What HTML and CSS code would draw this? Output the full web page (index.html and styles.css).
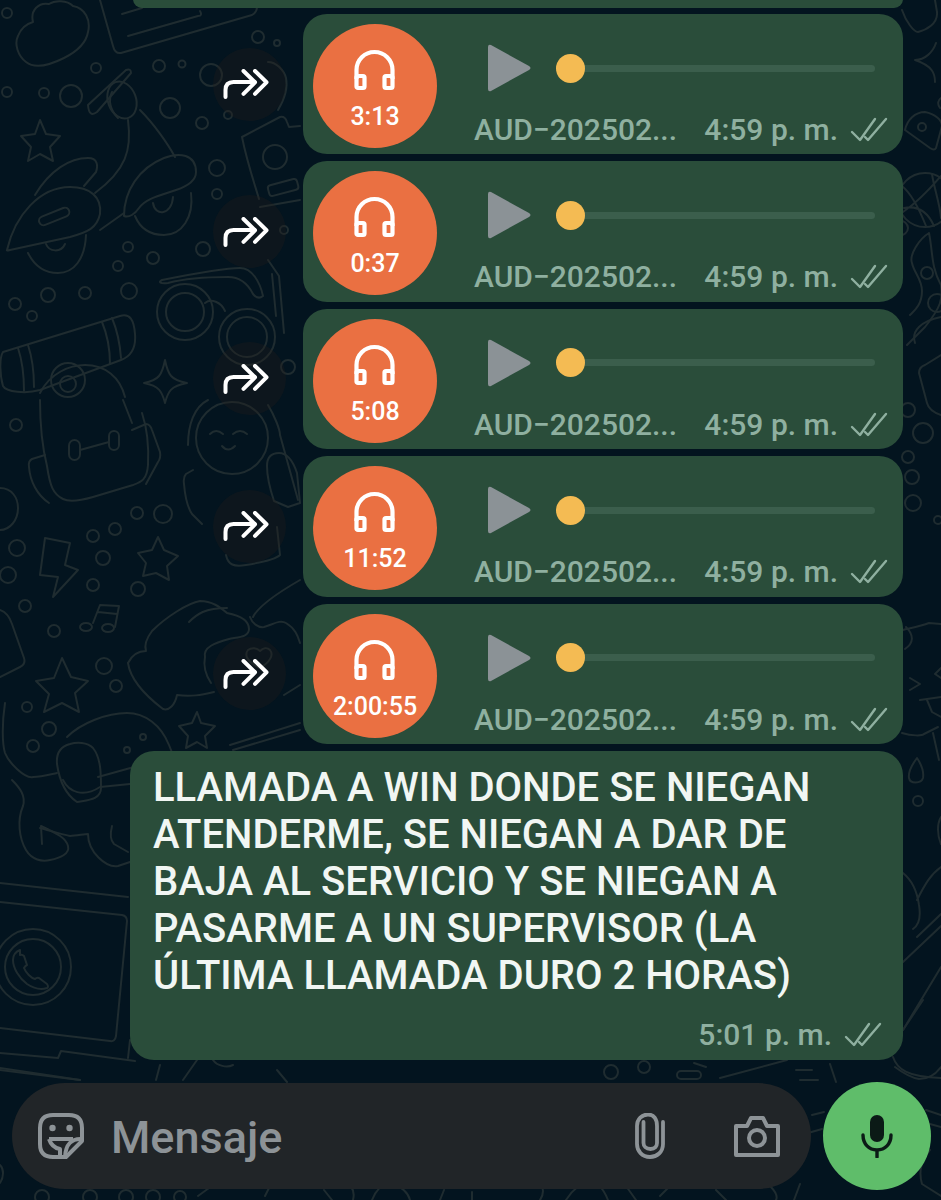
FILE: index.html
```html
<!DOCTYPE html>
<html lang="es">
<head>
<meta charset="utf-8">
<title>Chat</title>
<link rel="stylesheet" href="styles.css">
</head>
<body>
<svg class="wallpaper" width="941" height="1200" viewBox="0 0 941 1200" fill="none" stroke="#1f2c30" stroke-width="2" stroke-linecap="round" stroke-linejoin="round" aria-hidden="true">
  <!-- cloud and note card -->
  <path d="M33 22c-3-12 6-20 16-18 6-4 18-4 24 2 12 2 18 14 15 26-2 12-12 20-24 26-12 6-28 12-38 4-8-6-12-18-8-26 3-8 8-12 15-14z"/>
  <path d="M100 0l13 46q2 8 8 7L252 15q5-3 5-8"/>
  <path d="M128 36l70-20q5 0 2-5M122 14l20-6"/>
  <!-- scooter -->
  <path d="M88 105L126 70q5-2 5 3L97 112q-8 6-9-7z"/>
  <ellipse cx="122" cy="100" rx="14" ry="19" transform="rotate(-20 122 100)"/>
  <path d="M112 92c-4 8-2 18 6 26"/>
  <path d="M128 120c4 30-2 50-33 73"/>
  <path d="M140 110c14 14 28 34 35 47"/>
  <path d="M35 195C50 170 70 158 88 158c10 0 10 8 8 14l-12 14"/>
  <path d="M7 250C15 215 40 187 70 187c20 0 32 10 30 27-3 14-12 18-30 23l-60 13q-4 1-3 0z"/>
  <rect x="38" y="212" width="32" height="9" rx="4.500" transform="rotate(-22 54 216)"/>
  <path d="M28 253c6 12 16 20 30 20 16 0 27-14 28-38"/>
  <path d="M46 244c3 8 15 9 19 0"/>
  <path d="M100 230l24-17"/>
  <path d="M124 216c0-25 15-48 40-58 15-6 32-4 32 14 0 8-8 14-20 18-14 5-30 8-37 18-4 6-10 10-15 8z"/>
  <path d="M135 216c5 12 15 19 29 19 18 0 30-18 27-42"/>
  <path d="M153 203c2 14 19 12 20-6"/>
  <path d="M40 120l6 14 14 2-10 11 3 14-13-7-12 7 3-14-10-11 14-2z"/>
  <!-- bubbles around the scooter -->
  <g>
    <circle cx="7" cy="13" r="5"/><circle cx="96" cy="68" r="5"/><circle cx="159" cy="66" r="6"/><circle cx="182" cy="64" r="3.500"/>
    <circle cx="7" cy="92" r="5"/><circle cx="44" cy="93" r="5"/><circle cx="71" cy="96" r="11"/><circle cx="170" cy="108" r="10"/>
    <circle cx="202" cy="123" r="6"/><circle cx="217" cy="168" r="8"/><circle cx="217" cy="194" r="5"/><circle cx="258" cy="37" r="6"/>
    <circle cx="277" cy="43" r="3"/><circle cx="211" cy="75" r="11"/><circle cx="228" cy="115" r="4"/><circle cx="128" cy="247" r="5"/>
    <circle cx="153" cy="258" r="6"/><circle cx="118" cy="266" r="5"/><circle cx="203" cy="249" r="7"/><circle cx="284" cy="230" r="4"/>
    <circle cx="288" cy="367" r="7"/><circle cx="48" cy="295" r="7"/><circle cx="85" cy="293" r="6"/><circle cx="129" cy="291" r="8"/>
    <circle cx="15" cy="304" r="6"/><circle cx="32" cy="316" r="5"/>
  </g>
  <!-- heart, can and glasses -->
  <path d="M268 62c8 0 16 8 18 16 2 10-2 22-8 32"/>
  <path d="M242 137l38-20q5-1 7 5l2 5 11-1M242 137c5 25 12 45 17 62"/>
  <circle cx="275" cy="157" r="12"/><rect x="268" y="182" width="30" height="11" rx="3" transform="rotate(-15 283 187)"/>
  <path d="M260 207l40-7"/>
  <path d="M162 280c30-6 60-12 78-12 12 0 20 14 23 28q-5 4-10-2c-6-12-14-17-25-17-20 0-45 2-60 6-8 1-10-1-6-3z"/>
  <circle cx="185" cy="312" r="28"/><circle cx="185" cy="312" r="19"/>
  <circle cx="247" cy="337" r="28"/><circle cx="247" cy="337" r="20"/>
  <path d="M268 260l11 16 5 57M272 274l4 42M205 303c6-5 16-1 20 8"/>
  <!-- flashlight and sparkle -->
  <path d="M3 352L120 316c10-3 14 4 15 18 1 12-3 22-14 26L40 390c-14 4-34 2-37-4-3-10-4-28 0-34z"/>
  <path d="M102 322c5 12 8 26 8 42M112 318c5 12 8 26 9 40M18 348c4 12 6 28 6 43M28 345c4 12 6 28 6 42"/>
  <circle cx="68" cy="380" r="17"/><circle cx="68" cy="384" r="8"/>
  <path d="M40 393c10-20 30-28 45-28 20 0 35 12 40 32"/>
  <path d="M165 360c3 15 6 20 22 23-16 3-19 8-22 20-3-12-6-17-21-20 15-3 18-8 21-23z"/>
  <!-- backpack -->
  <path d="M40 400c0 25 3 50 7 66 3 20 6 28 16 33 6 3 16 2 30-2l40-12c8-3 14-5 15-20 1-20-2-40-6-52M123 400l9 23"/>
  <rect x="69" y="440" width="11" height="20" rx="5.500"/><rect x="109" y="431" width="10" height="19" rx="5"/>
  <path d="M80 450l29-8"/>
  <path d="M45 455l-13 4q-4 2-3 8c1 14 8 28 20 36M132 430l14-6q4 0 6 6l8 22q1 6-2 10l-12 22"/>
  <path d="M0 488c12 0 18 10 18 20 0 12-8 22-18 22"/>
  <circle cx="16" cy="425" r="6"/>
  <!-- smiling character -->
  <circle cx="232" cy="438" r="36"/>
  <path d="M188 445c0-20 6-38 20-45M268 405c6 10 12 24 12 30l18 65"/>
  <path d="M210 434q6-6 13 0M233 434q7-6 14 0M222 446q6 7 13 0"/>
  <path d="M193 470l-7 4q-3 3-2 10c1 12 4 24 8 30l10 10"/>
  <path d="M267 466c0-8 4-13 12-13 8 0 14 8 18 20l3 30-12 4-14-6c-4-12-7-24-7-35z"/>
  <path d="M226 555c2 10 8 12 20 10 12-2 30-6 34-10l-3-28"/>
  <!-- lightning, note and stars -->
  <path d="M45 538l25 5-5 22 13 5-25 27 5-20-18-2z"/>
  <path d="M93 623l7-18 19 1-4 21M98 612l19 2"/><ellipse cx="86" cy="627" rx="6" ry="4"/><ellipse cx="108" cy="628" rx="6" ry="4"/>
  <path d="M158 537l6 13 14 6-11 10 2 14-13-7-13 3 3-13-8-10 14-3z"/>
  <path d="M62 658l9 19 17 4-13 12 4 19-17-9-18 9 5-18-13-13 18-3z"/>
  <path d="M197 712l4 11 14 3-10 10 2 12-10-6-11 6 2-12-9-10 13-3z"/>
  <g>
    <circle cx="137" cy="513" r="6"/><circle cx="163" cy="514" r="9"/><circle cx="115" cy="529" r="6"/><circle cx="93" cy="536" r="6"/>
    <circle cx="103" cy="558" r="7"/><circle cx="17" cy="548" r="8"/><circle cx="8" cy="575" r="8"/><circle cx="93" cy="585" r="6"/>
    <circle cx="138" cy="589" r="7"/><circle cx="25" cy="606" r="6"/><circle cx="54" cy="631" r="6"/><circle cx="104" cy="666" r="8"/>
    <circle cx="116" cy="686" r="6"/><circle cx="27" cy="707" r="5"/><circle cx="49" cy="729" r="7"/><circle cx="33" cy="746" r="6"/>
  </g>
  <path d="M0 610c6 2 10 8 12 14l12 34q2 6-4 9L0 677"/>
  <!-- hands forming a heart -->
  <path d="M128 663c4-8 10-12 18-12-2-6 0-12 6-20 14-14 36-28 48-30 12 0 20 6 27 12 10 2 22 6 22 16 0 8-10 8-20 10-14 4-26 8-24 18-2 10 2 20 6 26"/>
  <path d="M128 663c2 14 14 30 35 46 6 2 12-4 14-14 14 2 24 0 37-3"/>
  <path d="M189 622c8-8 16-14 38-14"/>
  <path d="M253 617c4-8 14-18 47-37M250 617c2 6 8 11 14 10 8-2 16-8 22-4 10 6 12 14 14 20"/>
  <path d="M284 695l16-10"/>
  <path d="M248 650c-4 5-1 12 12 18 10-6 14-13 10-18-3-3-7-2-10 1-3-3-8-4-12-1z"/>
  <!-- headset and strap -->
  <path d="M67 737c14-14 40-24 60-24 18 0 34 12 42 32l4 10"/>
  <path d="M70 744c-8 2-14 8-13 20 2 14 8 30 20 38 10-2 24-2 24-14 0-14 0-30-8-40-6-6-16-6-23-4z"/>
  <path d="M5 703c-3 20-3 40 0 50 4 10 20 26 28 24 8 0 15-2 24-4M98 777l36-10"/>
  <circle cx="143" cy="737" r="3"/><circle cx="127" cy="750" r="3"/>
  <path d="M230 745l70-22M233 750l67-20"/>
  <!-- second pair of hands -->
  <path d="M12 780c8 8 14 16 11 26-6 14-4 32 3 44 6 10 16 12 24 10 10-2 20-6 18-14-2-8-10-12-27-20l1 18"/>
  <path d="M40 828c8 2 20 6 30 8 6 0 14-2 18-2 0 18 18 34 30 32l12-4M112 826c-2 8-2 14 2 18l14 8M63 780c6 12 20 18 37 7l30-3"/>
  <!-- laptop with phone logo -->
  <path d="M0 883L128 897M0 902L122 915q5 1 5 6L116 1036q-1 6-6 5L0 1028"/>
  <path d="M0 1053l58 5 3-7 74 10M130 1040l-2 18M0 1068l80 12"/>
  <circle cx="33" cy="967" r="38"/><circle cx="33" cy="967" r="28"/>
  <path d="M20 950c-5 2-7 6-7 10 0 8 6 18 14 24 6 4 14 6 20 4q2-1 0-4l-8-6q-2-1-4 1c-4-1-9-6-11-11q1-2 3-3l-3-9q-2-2-4-1z"/>
  <!-- strip above and below the message field -->
  <path d="M0 1070l80 10M160 1065l-4 15M197 1060l-14 20M213 1060c4 6 14 8 20 5M277 1070l10 12"/>
  <circle cx="611" cy="1072" r="7"/><circle cx="644" cy="1067" r="6"/>
  <rect x="677" y="1071" width="24" height="8" rx="4"/>
  <path d="M694 1063l12 4M720 1078l67-18M796 1070h16M800 1080h18M830 1064l6 18"/>
  <path d="M893 1057c4 12 14 20 48 21M923 1000l-20 30M812 1115l12-3M808 1133l14-4M926 1110l15 5M930 1124l11 3"/>
  <path d="M0 1165c4 4 4 12 0 18M930 1150c-8 10-12 20-8 34l19 12"/>
  <circle cx="42" cy="1197" r="7"/><circle cx="90" cy="1197" r="7"/><circle cx="126" cy="1197" r="7"/><circle cx="153" cy="1197" r="7"/><circle cx="180" cy="1197" r="6"/>
  <path d="M198 1196l22-16M265 1196l6-12M324 1190l8 10M345 1182c8 4 10 10 8 18M372 1200c4-10 10-16 18-18 10 4 18 10 20 18M444 1190l-4 10M472 1192v8M540 1182c4 6 4 12 0 18M566 1200c6-10 16-18 24-18s14 8 18 18M626 1186l10 14M660 1196l14-14M716 1190l10 10M770 1186c4 4 8 10 6 14M800 1184l-6 16"/>
  <!-- right edge -->
  <path d="M902 10c4 12 12 22 16 22 8-2 20-8 19-20l-2-12"/>
  <path d="M915 60c10 0 18-8 21-17M935 82c0-8-2-16-20-22M941 98c-3 2-4 6-1 10"/>
  <path d="M905 130c2-10 10-18 20-18 10 2 17 8 17 14l-6 22c-1 2-3 2-6 0z"/>
  <circle cx="922" cy="127" r="4"/>
  <circle cx="925" cy="200" r="27"/>
  <path d="M902 186c10 8 20 30 24 40M941 176c-12 14-26 28-38 36M932 174c2 14 8 30 9 44M904 208c10-2 22 0 30 18"/>
  <path d="M898 220c6 0 10 4 10 8s-4 8-10 8"/>
  <path d="M929 233c-10 6-20 22-17 30 2 10 10 16 10 28 0 14-8 20-12 24M929 233c4 20 2 34 12 52 2 14 0 22-16 42l-18 18"/>
  <circle cx="927" cy="273" r="6"/><circle cx="937" cy="303" r="9"/>
  <path d="M915 343c-4-12 6-22 26-26"/>
  <path d="M941 355l-16 10q-6 2-6 8l8 30q2 8 14 12"/>
  <circle cx="908" cy="410" r="7"/><circle cx="923" cy="433" r="10"/><circle cx="908" cy="457" r="6"/><circle cx="912" cy="477" r="7"/><circle cx="913" cy="503" r="8"/><circle cx="938" cy="520" r="4"/>
  <path d="M903 630c8-2 18-4 26-7l12 1M906 627c8 8 8 16-1 22M910 678l10 6-10 6M941 668l-6 6 6 4M920 700l21-3M927 700l5 12 9 5"/>
  <path d="M902 733c10 3 20 3 22 1l14-7M933 733l6 27"/>
  <path d="M917 758c-6 8-9 14-8 20 1 6 12 6 14 0 1-6-2-14-6-20z"/>
  <circle cx="918" cy="801" r="5"/>
  <path d="M941 817c-4 6-4 18 0 27M903 873c10 8 14 18 16 32 2 12 0 20-6 24M917 900c8-16 14-26 24-33M917 937l24-23M903 962l38-36M903 1030l38-63M895 1067c8 6 18 11 24 12 8 0 16-4 22-12"/>
</svg>

<main class="chat">
  <div class="bubble-stub"></div>

  <article class="row">
    <button class="forward" type="button"><svg class="forward-icon" width="46" height="30" viewBox="0 0 46 30" fill="none" stroke="#fff" stroke-width="4" stroke-linecap="round" stroke-linejoin="round"><path d="M2.500 28v-7q0-8 8-8h21"/><path d="M20.500 2l11.500 11.300-11.500 11.500"/><path d="M32 2l11.500 11.300-11.500 11.500"/></svg></button>
    <div class="bubble audio">
      <div class="disc">
        <svg class="phones" width="44" height="42" viewBox="0 0 44 42" fill="none" stroke="#fff" stroke-width="4.200" stroke-linejoin="round"><path d="M3.500 30V21a18 18 0 0 1 36 0v9"/><rect x="3.500" y="27" width="8" height="12" rx="1.500"/><rect x="31.500" y="27" width="8" height="12" rx="1.500"/></svg>
        <span class="duration">3:13</span>
      </div>
      <div class="track-area">
        <div class="player">
          <svg class="play" width="48" height="50" viewBox="0 0 48 50"><path d="M3 4v42q0 3 3 2l38-21q3-2 0-4L6 2Q3 1 3 4z" fill="#8b9296"/></svg>
          <div class="scrub"><span class="thumb"></span></div>
        </div>
        <div class="meta"><span class="file">AUD&#8722;202502...</span><span class="time">4:59 p. m.</span><svg class="ticks" width="38" height="26" viewBox="0 0 38 26" fill="none" stroke="#8fb0a0" stroke-width="2.400" stroke-linecap="round" stroke-linejoin="round"><path d="M2 15l8 8L25 2"/><path d="M15 20l3 3L36 2"/></svg></div>
      </div>
    </div>
  </article>

  <article class="row">
    <button class="forward" type="button"><svg class="forward-icon" width="46" height="30" viewBox="0 0 46 30" fill="none" stroke="#fff" stroke-width="4" stroke-linecap="round" stroke-linejoin="round"><path d="M2.500 28v-7q0-8 8-8h21"/><path d="M20.500 2l11.500 11.300-11.500 11.500"/><path d="M32 2l11.500 11.300-11.500 11.500"/></svg></button>
    <div class="bubble audio">
      <div class="disc">
        <svg class="phones" width="44" height="42" viewBox="0 0 44 42" fill="none" stroke="#fff" stroke-width="4.200" stroke-linejoin="round"><path d="M3.500 30V21a18 18 0 0 1 36 0v9"/><rect x="3.500" y="27" width="8" height="12" rx="1.500"/><rect x="31.500" y="27" width="8" height="12" rx="1.500"/></svg>
        <span class="duration">0:37</span>
      </div>
      <div class="track-area">
        <div class="player">
          <svg class="play" width="48" height="50" viewBox="0 0 48 50"><path d="M3 4v42q0 3 3 2l38-21q3-2 0-4L6 2Q3 1 3 4z" fill="#8b9296"/></svg>
          <div class="scrub"><span class="thumb"></span></div>
        </div>
        <div class="meta"><span class="file">AUD&#8722;202502...</span><span class="time">4:59 p. m.</span><svg class="ticks" width="38" height="26" viewBox="0 0 38 26" fill="none" stroke="#8fb0a0" stroke-width="2.400" stroke-linecap="round" stroke-linejoin="round"><path d="M2 15l8 8L25 2"/><path d="M15 20l3 3L36 2"/></svg></div>
      </div>
    </div>
  </article>

  <article class="row">
    <button class="forward" type="button"><svg class="forward-icon" width="46" height="30" viewBox="0 0 46 30" fill="none" stroke="#fff" stroke-width="4" stroke-linecap="round" stroke-linejoin="round"><path d="M2.500 28v-7q0-8 8-8h21"/><path d="M20.500 2l11.500 11.300-11.500 11.500"/><path d="M32 2l11.500 11.300-11.500 11.500"/></svg></button>
    <div class="bubble audio">
      <div class="disc">
        <svg class="phones" width="44" height="42" viewBox="0 0 44 42" fill="none" stroke="#fff" stroke-width="4.200" stroke-linejoin="round"><path d="M3.500 30V21a18 18 0 0 1 36 0v9"/><rect x="3.500" y="27" width="8" height="12" rx="1.500"/><rect x="31.500" y="27" width="8" height="12" rx="1.500"/></svg>
        <span class="duration">5:08</span>
      </div>
      <div class="track-area">
        <div class="player">
          <svg class="play" width="48" height="50" viewBox="0 0 48 50"><path d="M3 4v42q0 3 3 2l38-21q3-2 0-4L6 2Q3 1 3 4z" fill="#8b9296"/></svg>
          <div class="scrub"><span class="thumb"></span></div>
        </div>
        <div class="meta"><span class="file">AUD&#8722;202502...</span><span class="time">4:59 p. m.</span><svg class="ticks" width="38" height="26" viewBox="0 0 38 26" fill="none" stroke="#8fb0a0" stroke-width="2.400" stroke-linecap="round" stroke-linejoin="round"><path d="M2 15l8 8L25 2"/><path d="M15 20l3 3L36 2"/></svg></div>
      </div>
    </div>
  </article>

  <article class="row">
    <button class="forward" type="button"><svg class="forward-icon" width="46" height="30" viewBox="0 0 46 30" fill="none" stroke="#fff" stroke-width="4" stroke-linecap="round" stroke-linejoin="round"><path d="M2.500 28v-7q0-8 8-8h21"/><path d="M20.500 2l11.500 11.300-11.500 11.500"/><path d="M32 2l11.500 11.300-11.500 11.500"/></svg></button>
    <div class="bubble audio">
      <div class="disc">
        <svg class="phones" width="44" height="42" viewBox="0 0 44 42" fill="none" stroke="#fff" stroke-width="4.200" stroke-linejoin="round"><path d="M3.500 30V21a18 18 0 0 1 36 0v9"/><rect x="3.500" y="27" width="8" height="12" rx="1.500"/><rect x="31.500" y="27" width="8" height="12" rx="1.500"/></svg>
        <span class="duration">11:52</span>
      </div>
      <div class="track-area">
        <div class="player">
          <svg class="play" width="48" height="50" viewBox="0 0 48 50"><path d="M3 4v42q0 3 3 2l38-21q3-2 0-4L6 2Q3 1 3 4z" fill="#8b9296"/></svg>
          <div class="scrub"><span class="thumb"></span></div>
        </div>
        <div class="meta"><span class="file">AUD&#8722;202502...</span><span class="time">4:59 p. m.</span><svg class="ticks" width="38" height="26" viewBox="0 0 38 26" fill="none" stroke="#8fb0a0" stroke-width="2.400" stroke-linecap="round" stroke-linejoin="round"><path d="M2 15l8 8L25 2"/><path d="M15 20l3 3L36 2"/></svg></div>
      </div>
    </div>
  </article>

  <article class="row">
    <button class="forward" type="button"><svg class="forward-icon" width="46" height="30" viewBox="0 0 46 30" fill="none" stroke="#fff" stroke-width="4" stroke-linecap="round" stroke-linejoin="round"><path d="M2.500 28v-7q0-8 8-8h21"/><path d="M20.500 2l11.500 11.300-11.500 11.500"/><path d="M32 2l11.500 11.300-11.500 11.500"/></svg></button>
    <div class="bubble audio">
      <div class="disc">
        <svg class="phones" width="44" height="42" viewBox="0 0 44 42" fill="none" stroke="#fff" stroke-width="4.200" stroke-linejoin="round"><path d="M3.500 30V21a18 18 0 0 1 36 0v9"/><rect x="3.500" y="27" width="8" height="12" rx="1.500"/><rect x="31.500" y="27" width="8" height="12" rx="1.500"/></svg>
        <span class="duration">2:00:55</span>
      </div>
      <div class="track-area">
        <div class="player">
          <svg class="play" width="48" height="50" viewBox="0 0 48 50"><path d="M3 4v42q0 3 3 2l38-21q3-2 0-4L6 2Q3 1 3 4z" fill="#8b9296"/></svg>
          <div class="scrub"><span class="thumb"></span></div>
        </div>
        <div class="meta"><span class="file">AUD&#8722;202502...</span><span class="time">4:59 p. m.</span><svg class="ticks" width="38" height="26" viewBox="0 0 38 26" fill="none" stroke="#8fb0a0" stroke-width="2.400" stroke-linecap="round" stroke-linejoin="round"><path d="M2 15l8 8L25 2"/><path d="M15 20l3 3L36 2"/></svg></div>
      </div>
    </div>
  </article>

  <article class="bubble note">
    <p class="note-text">LLAMADA A WIN DONDE SE NIEGAN<br>ATENDERME, SE NIEGAN A DAR DE<br>BAJA AL SERVICIO Y SE NIEGAN A<br>PASARME A UN SUPERVISOR (LA<br>ÚLTIMA LLAMADA DURO 2 HORAS)</p>
    <div class="meta note-meta"><span class="time">5:01 p. m.</span><svg class="ticks" width="38" height="26" viewBox="0 0 38 26" fill="none" stroke="#8fb0a0" stroke-width="2.400" stroke-linecap="round" stroke-linejoin="round"><path d="M2 15l8 8L25 2"/><path d="M15 20l3 3L36 2"/></svg></div>
  </article>
</main>

<footer class="composer">
  <div class="input-pill">
    <svg class="sticker" width="48" height="48" viewBox="0 0 48 48" fill="none" stroke="#8d9397" stroke-width="4" stroke-linejoin="round"><path d="M16 3h16q13 0 13 13v13L29 45H16Q3 45 3 32V16Q3 3 16 3z"/><path d="M45 27q-16-1-17 18"/><path d="M12 27c2 6 5 9 11 10v8M12 27h24"/><circle cx="15.500" cy="16" r="3.200" fill="#8d9397" stroke="none"/><circle cx="32.500" cy="16" r="3.200" fill="#8d9397" stroke="none"/></svg>
    <span class="placeholder">Mensaje</span>
    <svg class="clip" width="30" height="46" viewBox="0 0 30 46" fill="none" stroke="#8d9397" stroke-width="3.800" stroke-linecap="round"><path d="M28 9V31C28 39 22 44 15 44 7 44 2 38 2 31V13C2 6 7 1.500 13 1.500S22 6 22 13V30C22 33 20 36 15.500 36S8.500 33 8.500 30V9"/></svg>
    <svg class="camera" width="48" height="42" viewBox="0 0 48 42" fill="none" stroke="#8d9397" stroke-width="4" stroke-linejoin="round"><path d="M3 11h11l4-8h12l4 8h11v29H3z"/><circle cx="24" cy="23" r="8"/></svg>
  </div>
  <button class="mic" type="button"><svg width="32" height="44" viewBox="0 0 32 44" fill="none"><rect x="9" y="1" width="14" height="27" rx="7" fill="#0b1a16"/><path d="M2 21c0 9 6 15 14 15s14-6 14-15M16 36v7" stroke="#0b1a16" stroke-width="3.400" stroke-linecap="round"/></svg></button>
</footer>
</body>
</html>
```

FILE: styles.css
```css
* {
  box-sizing: border-box;
}

html,
body {
  height: 100%;
}

body {
  margin: 0;
  position: relative;
  width: 941px;
  height: 1200px;
  overflow: hidden;
  background: #03141f;
  font-family: Roboto, "Liberation Sans", sans-serif;
  display: flex;
  flex-direction: column;
}

.wallpaper {
  position: absolute;
  inset: 0;
}

.chat {
  position: relative;
  display: flex;
  flex-direction: column;
  gap: 7px;
  padding-right: 38px;
  height: 1081px;
}

.bubble {
  background: #2a4d3a;
  border-radius: 24px;
}

.bubble-stub {
  flex: none;
  width: 770px;
  height: 9px;
  margin: -1px 0 -1px 133px;
  background: #2a4d3a;
  border-radius: 0 0 20px 20px;
}

.row {
  flex: none;
  display: flex;
  align-items: center;
  justify-content: flex-end;
  gap: 17px;
  height: 140.400px;
}

.forward {
  width: 73px;
  height: 73px;
  padding: 0;
  border: 0;
  border-radius: 50%;
  background: rgba(36, 30, 28, 0.3);
  display: flex;
  align-items: center;
  justify-content: center;
}

.forward-icon {
  flex: none;
  margin-left: -8px;
}

.audio {
  width: 600px;
  height: 100%;
  padding: 10px 15px 0 10px;
  display: flex;
  gap: 37px;
}

.disc {
  flex: none;
  width: 124px;
  height: 124px;
  border-radius: 50%;
  background: #ea7042;
  color: #fff;
  display: flex;
  flex-direction: column;
  align-items: center;
  padding-top: 25px;
}

.phones {
  flex: none;
}

.duration {
  margin-top: 11px;
  font-size: 25px;
  font-weight: 500;
  line-height: 30px;
  white-space: nowrap;
}

.track-area {
  flex: 1;
  min-width: 0;
}

.player {
  display: flex;
  align-items: center;
  gap: 23px;
  height: 50px;
  margin: 19px 13px 0 11px;
}

.play {
  flex: none;
}

.scrub {
  flex: 1;
  height: 7px;
  border-radius: 4px;
  background: #3b5e4c;
  display: flex;
  align-items: center;
}

.thumb {
  width: 29px;
  height: 29px;
  border-radius: 50%;
  background: #f4bb53;
}

.meta {
  display: flex;
  align-items: center;
  color: #8fb0a0;
  font-size: 30px;
  font-weight: 500;
  line-height: 34px;
  white-space: nowrap;
  margin-top: 20px;
}

.file {
  flex: 1;
}

.ticks {
  margin-left: 12px;
  flex: none;
}

.note {
  align-self: flex-end;
  flex: none;
  width: 773px;
  height: 309px;
  padding: 13px 21px 0 23px;
}

.note-text {
  margin: 0;
  color: #f1f6f3;
  font-size: 40px;
  font-weight: 500;
  line-height: 47px;
  white-space: nowrap;
}

.note-meta {
  justify-content: flex-end;
  margin-top: 19px;
}

.composer {
  position: relative;
  display: flex;
  align-items: center;
  gap: 12px;
  padding: 0 10px 0 12px;
  height: 109px;
}

.input-pill {
  flex: 1;
  height: 106px;
  border-radius: 53px;
  background: #212528;
  display: flex;
  align-items: center;
  padding: 0 30px 0 25px;
}

.sticker {
  flex: none;
}

.placeholder {
  flex: 1;
  margin-left: 26px;
  padding-top: 3px;
  color: #8d9397;
  font-size: 45px;
  font-weight: 500;
}

.clip {
  flex: none;
  margin-right: 68px;
}

.camera {
  flex: none;
}

.mic {
  flex: none;
  width: 108px;
  height: 108px;
  padding: 0;
  border: 0;
  border-radius: 50%;
  background: #5fbd6a;
  display: flex;
  align-items: center;
  justify-content: center;
}
```
